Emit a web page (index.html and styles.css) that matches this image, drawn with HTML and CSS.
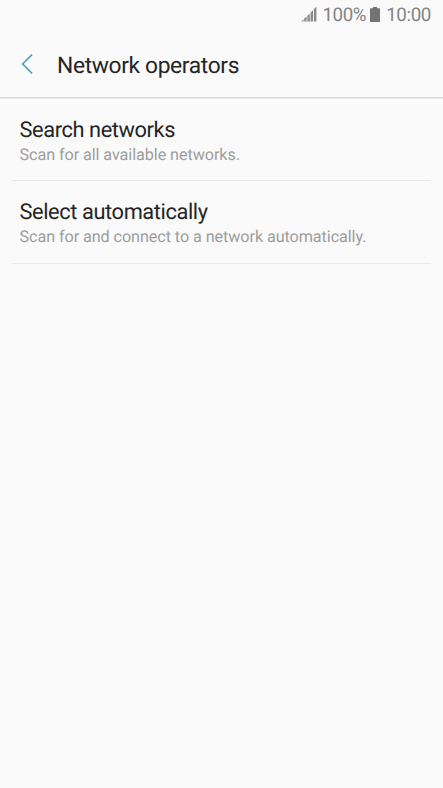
FILE: index.html
```html
<!DOCTYPE html>
<html lang="en">
<head>
<meta charset="utf-8">
<title>Network operators</title>
<link rel="stylesheet" href="styles.css">
</head>
<body>
<div class="status">
<svg class="signal" width="16" height="16" viewBox="0 0 16 16"><path d="M.3 15.500L2.500 13.300v2.200zM3.200 12.500l2.400-2v5H3.200zM6.400 9.700l2.400-2v7.800H6.400zM9.600 6.500l2.400-2.300v11.300H9.600zM12.900 3l2.500-2.300v14.800h-2.500z"/></svg>
<span class="percent">100%</span>
<svg class="battery" width="10" height="15" viewBox="0 0 10 15"><path d="M3 0h4v1.300h3V15H0V1.300h3z"/></svg>
<span class="time">10:00</span>
</div>
<header class="header">
<svg class="back" width="12" height="20" viewBox="0 0 12 20"><path d="M11 .7L1.600 10l9.400 9.300"/></svg>
<h1 class="title">Network operators</h1>
</header>
<main class="list">
<section class="item"><h2 class="name">Search networks</h2><p class="note">Scan for all available networks.</p></section>
<section class="item"><h2 class="name">Select automatically</h2><p class="note">Scan for and connect to a network automatically.</p></section>
</main>
</body>
</html>
```
FILE: styles.css
```css
* { box-sizing: border-box; margin: 0; padding: 0; }
body { background: #fafafa; font-family: Roboto, sans-serif; color: #252525; min-height: 788px; text-rendering: geometricPrecision; }
.status { height: 29px; display: flex; align-items: center; justify-content: flex-end; padding-right: 12px; color: #848484; fill: #737373; font-size: 18.8px; letter-spacing: -.4px; }
.signal { fill: #8a8a8a; margin-bottom: 1px; }
.percent { margin: 0 4px 0 5px; }
.time { margin-left: 6px; }
.header { height: 69px; display: flex; align-items: center; padding-left: 21px; border-bottom: 1px solid #d8d8d8; box-shadow: 0 1px 0 #ececec; }
.back { fill: none; stroke: #4fa3c4; stroke-width: 1.7; margin-top: 1px; }
.title { margin: 6px 0 0 24px; font-size: 22.8px; line-height: 26px; font-weight: 400; letter-spacing: -.36px; }
.list { padding: 0 12px; }
.item { height: 83px; padding: 20px 7.500px 0; border-bottom: 1px solid #e6e6e6; }
.item + .item { padding-top: 19px; border-bottom-color: #ebebeb; }
.name { font-size: 21.8px; line-height: 25px; font-weight: 400; letter-spacing: -.4px; }
.note { font-size: 16.200px; line-height: 24px; color: #9d9d9d; letter-spacing: -.08px; }
```
